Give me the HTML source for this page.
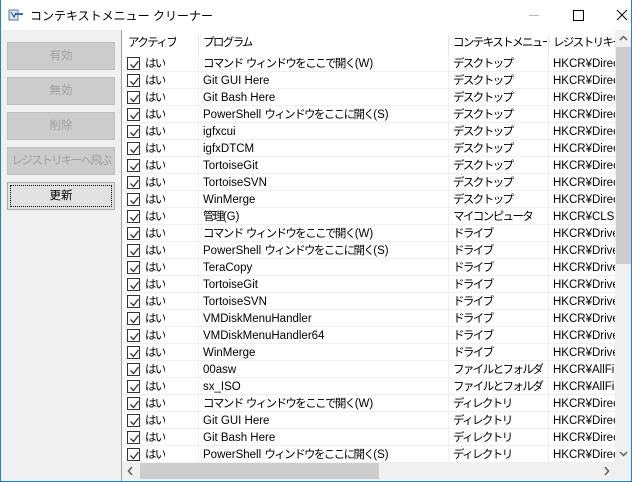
<!DOCTYPE html>
<html><head><meta charset="utf-8"><style>
*{margin:0;padding:0;box-sizing:border-box}
body{width:632px;height:482px;overflow:hidden;background:#f0f0f0;font-family:"Liberation Sans","Noto Sans CJK JP",sans-serif;font-size:11.5px;color:#000;position:relative}
.j{letter-spacing:-1.6px;font-size:11.5px}
.win{position:absolute;left:0;top:0;width:632px;height:482px;border:1px solid #1883d7;border-top:none}
.title{position:absolute;left:0;top:0;width:632px;height:30px;background:#fff}
.title span.t{position:absolute;left:30px;top:7px;font-size:12px}
.btn{position:absolute;left:7px;width:108px;height:28px;background:#cccccc;border:1px solid #bfbfbf;color:#a0a0a0;text-align:center;line-height:26px;white-space:nowrap}
.btn.on{background:#e1e1e1;border:1px solid #adadad;color:#000}
.btn.on i{position:absolute;left:2px;top:2px;right:2px;bottom:2px;border:1px dotted #000}
.list{position:absolute;left:121px;top:30px;width:510px;height:451px;background:#fff;border-left:1px solid #a0a0a0;overflow:hidden}
.hdr{position:absolute;left:0;top:0;height:25px;width:493px;background:#fff}
.hdr div{position:absolute;top:5px;line-height:16px;white-space:nowrap;overflow:hidden}
.sep{position:absolute;top:0;height:25px;width:1px;background:#e5e5e5}
.row{position:absolute;left:0;width:493px;height:17px;border-bottom:1px solid #f0f0f0;white-space:nowrap}
.row div{position:absolute;top:1px;line-height:16px;height:16px;overflow:hidden}
.row div.vl{top:0;height:17px}
.cb{position:absolute;left:5px;top:2px;width:13px;height:13px;border:1px solid #333;background:#fff}
.cb svg{position:absolute;left:1px;top:1px}
.vs{position:absolute;left:493px;top:0;width:17px;height:432px;background:#f0f0f0}
.hs{position:absolute;left:0;top:432px;width:493px;height:18px;background:#f0f0f0}
</style></head><body>
<div class="title">
<svg style="position:absolute;left:8px;top:8px" width="16" height="14"><rect x="1" y="2" width="9" height="10" fill="#d8e4f0" stroke="#5a7a9a"/><rect x="7" y="5" width="8" height="2" fill="#3a6ea5"/><path d="M3 4 L6 9 L8 5" stroke="#1a4a8a" fill="none"/></svg>
<span class="t">コンテキストメニュー クリーナー</span>
<svg style="position:absolute;left:496px;top:0" width="136" height="30"><line x1="33" y1="15.5" x2="43" y2="15.5" stroke="#bbb"/><rect x="77.5" y="10.5" width="10" height="10" fill="none" stroke="#000"/><path d="M121 10 L131 20 M131 10 L121 20" stroke="#000"/></svg>
</div>
<div class="btn" style="top:42px">有効</div>
<div class="btn" style="top:77px">無効</div>
<div class="btn" style="top:112px">削除</div>
<div class="btn" style="top:147px"><span class="j">レジストリキーへ飛ぶ</span></div>
<div class="btn on" style="top:182px"><i></i>更新</div>
<div class="list">
<div class="hdr">
<div style="left:6px" class="j">アクティブ</div><div class="sep" style="left:76px"></div>
<div style="left:81px" class="j">プログラム</div><div class="sep" style="left:326px"></div>
<div style="left:331px;width:94px" class="j">コンテキストメニュー</div><div class="sep" style="left:426px"></div>
<div style="left:431px;width:62px" class="j">レジストリキー</div>
</div>
<div id="rows"></div>
<div class="vs">
<svg width="17" height="17" style="position:absolute;top:0"><path d="M5 10 L8.5 6.5 L12 10" stroke="#606060" stroke-width="1.5" fill="none"/></svg>
<div style="position:absolute;left:1px;top:17px;width:15px;height:217px;background:#cdcdcd"></div>
<svg width="17" height="17" style="position:absolute;top:415px"><path d="M5 7 L8.5 10.5 L12 7" stroke="#606060" stroke-width="1.5" fill="none"/></svg>
</div>
<div class="hs">
<svg width="17" height="18" style="position:absolute;left:0"><path d="M10 5 L6.5 9 L10 13" stroke="#606060" stroke-width="1.5" fill="none"/></svg>
<div style="position:absolute;left:18px;top:1px;width:239px;height:16px;background:#cdcdcd"></div>
<svg width="17" height="18" style="position:absolute;left:476px"><path d="M7 5 L10.5 9 L7 13" stroke="#606060" stroke-width="1.5" fill="none"/></svg>
</div>
<div style="position:absolute;left:493px;top:432px;width:17px;height:18px;background:#f0f0f0"></div>
</div>
<div class="win"></div>
<script>
function w(s){return s.replace(/([^\x00-\x7f¥]+)/g,'<span class="j">$1</span>');}
var d=[["コマンド ウィンドウをここで開く(W)","デスクトップ","HKCR¥Direct"],["Git GUI Here","デスクトップ","HKCR¥Direct"],["Git Bash Here","デスクトップ","HKCR¥Direct"],["PowerShell ウィンドウをここに開く(S)","デスクトップ","HKCR¥Direct"],["igfxcui","デスクトップ","HKCR¥Direct"],["igfxDTCM","デスクトップ","HKCR¥Direct"],["TortoiseGit","デスクトップ","HKCR¥Direct"],["TortoiseSVN","デスクトップ","HKCR¥Direct"],["WinMerge","デスクトップ","HKCR¥Direct"],["管理(G)","マイコンピュータ","HKCR¥CLSID"],["コマンド ウィンドウをここで開く(W)","ドライブ","HKCR¥Drive¥"],["PowerShell ウィンドウをここに開く(S)","ドライブ","HKCR¥Drive¥"],["TeraCopy","ドライブ","HKCR¥Drive¥"],["TortoiseGit","ドライブ","HKCR¥Drive¥"],["TortoiseSVN","ドライブ","HKCR¥Drive¥"],["VMDiskMenuHandler","ドライブ","HKCR¥Drive¥"],["VMDiskMenuHandler64","ドライブ","HKCR¥Drive¥"],["WinMerge","ドライブ","HKCR¥Drive¥"],["00asw","ファイルとフォルダ","HKCR¥AllFile"],["sx_ISO","ファイルとフォルダ","HKCR¥AllFile"],["コマンド ウィンドウをここで開く(W)","ディレクトリ","HKCR¥Direct"],["Git GUI Here","ディレクトリ","HKCR¥Direct"],["Git Bash Here","ディレクトリ","HKCR¥Direct"],["PowerShell ウィンドウをここに開く(S)","ディレクトリ","HKCR¥Direct"]];
var h="";
for(var i=0;i<d.length;i++){var t=25+17*i;
h+='<div class="row" style="top:'+t+'px"><span class="cb"><svg width="11" height="11"><path d="M1.5 5.5 L4.5 8.5 L9.5 2" stroke="#333" stroke-width="1.3" fill="none"/></svg></span><div style="left:23px" class="j">はい</div><div class="vl" style="left:76px;width:1px;background:#f0f0f0"></div><div style="left:81px;width:244px">'+w(d[i][0])+'</div><div class="vl" style="left:326px;width:1px;background:#f0f0f0"></div><div style="left:331px;width:94px">'+w(d[i][1])+'</div><div class="vl" style="left:426px;width:1px;background:#f0f0f0"></div><div style="left:431px;width:62px">'+w(d[i][2])+'</div></div>';}
document.getElementById("rows").innerHTML=h;
</script>
</body></html>
